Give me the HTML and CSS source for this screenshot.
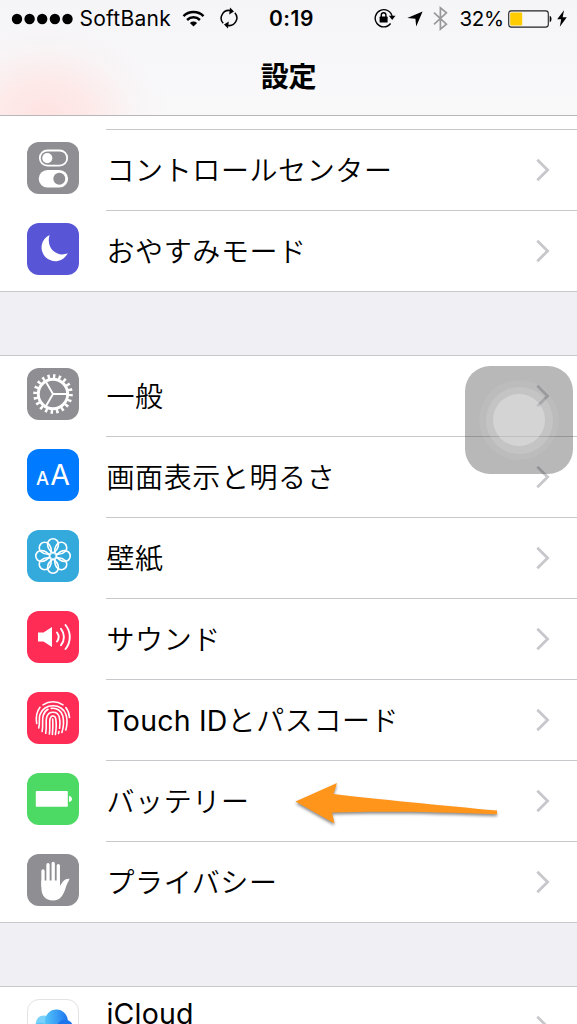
FILE: index.html
```html
<!DOCTYPE html>
<html lang="ja">
<head>
<meta charset="utf-8">
<title>設定</title>
<link rel="stylesheet" href="styles.css">
</head>
<body>
<svg class="defs" width="0" height="0">
  <symbol id="chev" viewBox="0 0 16 26"><path d="M2.3 2.800 12.600 13 2.300 23.200" fill="none" stroke="#c7c7cc" stroke-width="2.800"/></symbol>
</svg>
<div class="screen">
  <header class="header">
    <div class="status">
      <svg class="dots" width="62" height="12"><g fill="#000"><circle cx="6" cy="6" r="5.2"/><circle cx="18.6" cy="6" r="5.2"/><circle cx="31.2" cy="6" r="5.2"/><circle cx="43.9" cy="6" r="5.2"/><circle cx="56.5" cy="6" r="5.2"/></g></svg>
      <span class="carrier">SoftBank</span>
      <svg class="wifi" width="22" height="17" viewBox="0 0 22 17"><g fill="none" stroke="#000" stroke-width="2.5"><path d="M1 6.2a14.2 14.2 0 0 1 20 0"/><path d="M4.6 10a9.1 9.1 0 0 1 12.8 0"/></g><path d="M7.4 12.9a5.1 5.1 0 0 1 7.2 0L11 16.5z"/></svg>
      <svg class="sync" width="18" height="22" viewBox="0 0 18 22"><g fill="none" stroke="#000" stroke-width="1.5"><path d="M3.2 16.2A7.6 7.6 0 0 1 11 3.8"/><path d="M14.8 5.8A7.6 7.6 0 0 1 7 18.2"/></g><path d="M10 .4 14 4.6 9.2 7.4zM8 21.6 4 17.4l4.8-2.8z"/></svg>
      <span class="time">0:19</span>
      <svg class="lock" width="22" height="20" viewBox="0 0 22 20"><path d="M16.6 15.5A8.6 8.6 0 1 1 18.3 9" fill="none" stroke="#000" stroke-width="1.4"/><path d="M14.9 7.8h6.6l-3.3 4.2z"/><rect x="5.6" y="8.6" width="8" height="6" rx=".6"/><path d="M7.3 9V7a2.3 2.3 0 0 1 4.6 0v2" fill="none" stroke="#000" stroke-width="1.4"/></svg>
      <svg class="loc" width="16" height="16" viewBox="0 0 16 16"><path d="M15.6.4 9.2 15.6 8.4 7.8.3 7z"/></svg>
      <svg class="bt" width="15" height="25" viewBox="0 0 15 25"><path d="m1 6.6 12.400 11.600-6 5V1.800l6 5L1 18.400" fill="none" stroke="#999" stroke-width="1.700"/></svg>
      <span class="percent">32%</span>
      <svg class="batt" width="44" height="18" viewBox="0 0 44 18"><rect x=".7" y=".9" width="39.6" height="16.2" rx="2.6" fill="none" stroke="#222" stroke-width="1.1"/><rect x="2.2" y="2.4" width="12" height="13.2" rx="1" fill="#fc0"/><path d="M41.7 5.8c2.4.6 2.4 5.8 0 6.4z"/></svg>
      <svg class="bolt" width="10" height="17" viewBox="0 0 10 17"><path d="M7 .2.2 9.3h4L2.8 16.8 9.8 7.3H5.7z"/></svg>
    </div>
    <h1 class="title">設定</h1>
  </header>
  <main>
    <section class="group first">
      <div class="rule"></div>
      <div class="row">
        <svg class="icon gray" viewBox="0 0 52 52"><rect x="12.8" y="8.5" width="27.4" height="15.2" rx="7.6" fill="none" stroke="#fff" stroke-width="1.8"/><circle cx="20.3" cy="16.1" r="5.1" fill="#fff"/><rect x="11.7" y="28" width="29.4" height="17.6" rx="8.8" fill="#fff"/><circle cx="32.3" cy="36.8" r="6" fill="#8e8e93"/></svg>
        <div class="cell"><span class="label">コントロールセンター</span><svg class="chev"><use href="#chev"/></svg></div>
      </div>
      <div class="row last">
        <svg class="icon purple" viewBox="0 0 52 52"><path d="M22.600 12A13.700 13.700 0 1 0 40.800 30C31 35.200 18.400 25.500 22.600 12z" fill="#fff"/></svg>
        <div class="cell"><span class="label">おやすみモード</span><svg class="chev"><use href="#chev"/></svg></div>
      </div>
    </section>
    <section class="group">
      <div class="row">
        <svg class="icon gray" viewBox="0 0 52 52"><g fill="none" stroke="#fff"><circle cx="26" cy="26" r="14.700" stroke-width="2.900"/><circle cx="26" cy="26" r="17.700" stroke-width="4.200" pathLength="200" stroke-dasharray="4.400 5.600"/><path d="M26 26h14M26 26l-7-12.100M26 26l-7 12.100" stroke-width="1.900"/></g></svg>
        <div class="cell"><span class="label">一般</span><svg class="chev"><use href="#chev"/></svg></div>
      </div>
      <div class="row">
        <div class="icon blue"><span class="small-a">A</span><span class="big-a">A</span></div>
        <div class="cell"><span class="label">画面表示と明るさ</span><svg class="chev"><use href="#chev"/></svg></div>
      </div>
      <div class="row">
        <svg class="icon cyan" viewBox="0 0 52 52"><defs><path id="petal" d="M0-3C-3.800-5.500-5.400-8.500-5.400-11.800a5.400 5.400 0 0 1 10.800 0C5.400-8.500 3.800-5.500 0-3z"/></defs><g transform="translate(26 26)" fill="none" stroke="#fff" stroke-width="1.600"><use href="#petal"/><use href="#petal" transform="rotate(45)"/><use href="#petal" transform="rotate(90)"/><use href="#petal" transform="rotate(135)"/><use href="#petal" transform="rotate(180)"/><use href="#petal" transform="rotate(225)"/><use href="#petal" transform="rotate(270)"/><use href="#petal" transform="rotate(315)"/></g></svg>
        <div class="cell"><span class="label">壁紙</span><svg class="chev"><use href="#chev"/></svg></div>
      </div>
      <div class="row">
        <svg class="icon red" viewBox="0 0 52 52"><path d="M11 21.500h5.500L25 16v20l-8.500-5.500H11z" fill="#fff"/><g fill="none" stroke="#fff" stroke-width="1.900" stroke-linecap="round"><path d="M30 21.500a7.500 7.500 0 0 1 0 9"/><path d="M34 17.800a13 13 0 0 1 0 16.400"/><path d="M38.500 14a19 19 0 0 1 0 24"/></g></svg>
        <div class="cell"><span class="label">サウンド</span><svg class="chev"><use href="#chev"/></svg></div>
      </div>
      <div class="row">
        <svg class="icon red" viewBox="0 0 52 52"><g fill="none" stroke="#fff" stroke-width="1.600" stroke-linecap="round"><path d="M16 12.800C22 8.700 30 8.700 36 12.800"/><path d="M13 15.300C9.800 19.500 8.600 25 9.700 31.500M38.800 15.500c2.200 2.700 3.400 6 3.700 10"/><path d="M11.700 36C13.200 31 11.600 27 12.900 22.800 16.500 10.800 35.500 10.500 39.100 23c1.300 4.500 1.100 10-.3 15"/><path d="M15.100 39.500c1.300-6-.2-11.500 1-15.800C17 20.500 18.800 18.500 21 17.300M24.300 16.400c5.500-.8 10.200 2.500 11.500 7.600 1.100 4.800.7 11.500-.9 16.500"/><path d="M18.700 41.300c1.300-6.500-.3-12.300 1-16.300 2-6.300 10.700-6.300 12.500-.2 1.200 4.200 1 8.200.4 11.500M32 39.500l-.5 2"/><path d="M22.400 42c1-6.500-.3-12.500.8-15.700 1.200-3.300 4.700-3.100 5.500.2.800 4.500.600 10.500-.3 16M25.700 27c.4 5 .2 10.500-.3 15.500"/></g></svg>
        <div class="cell"><span class="label"><span class="latin">Touch ID</span>とパスコード</span><svg class="chev"><use href="#chev"/></svg></div>
      </div>
      <div class="row">
        <svg class="icon green" viewBox="0 0 52 52"><rect x="8.800" y="18" width="32" height="15.800" rx=".8" fill="#fff"/><path d="M42 23c4 .3 4 5.600 0 5.900z" fill="#fff"/></svg>
        <div class="cell"><span class="label">バッテリー</span><svg class="chev"><use href="#chev"/></svg></div>
        <svg class="arrow" width="212" height="52" viewBox="290 778 212 52"><path d="M295.500 801.500 337 783l-3.500 11c40 5 110 11.500 163.500 16.600v3.600C440 812 380 811 332 812.500l2.500 11z" fill="#ff951b"/></svg>
      </div>
      <div class="row last">
        <svg class="icon gray" viewBox="0 0 52 52"><g fill="none" stroke="#fff" stroke-width="3.300" stroke-linecap="round"><path d="M16 17v15M21 10.700V30M26.200 9.400V30M31.300 11.600V30"/></g><path d="M14.400 26.500h18.500v5.500c2-2.500 3.400-7.600 9.600-7.200-.8 2.800-2.400 4.200-3.600 8.200C36.800 40.500 33.700 46.500 26 46.500S14.400 41.500 14.400 34z" fill="#fff"/></svg>
        <div class="cell"><span class="label">プライバシー</span><svg class="chev"><use href="#chev"/></svg></div>
      </div>
    </section>
    <section class="group">
      <div class="row last">
        <svg class="icon white" viewBox="0 0 52 52"><defs><linearGradient id="cloud" x1="0" x2="1"><stop offset="0" stop-color="#55c4f8"/><stop offset=".5" stop-color="#3a9ff5"/><stop offset="1" stop-color="#1d75ee"/></linearGradient></defs><circle cx="16.500" cy="24.500" r="8.500" fill="#7ad2fa"/><circle cx="13" cy="32" r="8.500" fill="#5cc5f8"/><circle cx="29.500" cy="22" r="12" fill="url(#cloud)"/><circle cx="38.500" cy="29" r="8.500" fill="#1d75ee"/><rect x="12" y="28" width="28" height="12" fill="#2f8bf2"/></svg>
        <div class="cell"><span class="label cloud"><span class="latin">iCloud</span></span><svg class="chev"><use href="#chev"/></svg></div>
      </div>
    </section>
  </main>
  <div class="touch"><div class="ring outer"><div class="ring middle"><div class="ring inner"></div></div></div></div>
</div>
</body>
</html>
```
FILE: styles.css
```css
* { box-sizing: border-box; }
body { margin: 0; background: #efeff4; color: #000; font-family: Inter, "Noto Sans CJK JP", sans-serif; }
.defs { position: absolute; }
.screen { position: relative; width: 577px; height: 1024px; overflow: hidden; background: #efeff4; }

.header {
  height: 116px;
  border-bottom: 1px solid #b7b7ba;
  background: radial-gradient(ellipse 125px 96px at 46px 116px, #fee3e2 0%, rgba(254, 231, 230, .85) 35%, rgba(250, 240, 241, .45) 70%, rgba(247, 247, 249, 0) 100%), linear-gradient(#f5f5f8, #f9f9fa);
}
.status { display: flex; align-items: center; height: 38px; font-size: 20.500px; white-space: nowrap; }
.status svg { flex: none; }
.dots { margin-left: 11px; }
.carrier { width: 94px; margin-left: 6.500px; margin-top: -1px; font-size: 21px; letter-spacing: .25px; }
.wifi { margin: -2px 0 0 8px; width: 23px; }
.sync { margin: -2px 0 0 15px; }
.time { width: 48px; margin: -1px 0 0 31.500px; font-size: 21px; font-weight: 600; letter-spacing: .5px; }
.lock { margin: -2px 0 0 56.500px; }
.loc { margin-left: 11.500px; }
.bt { margin: -1px 0 0 9.500px; }
.percent { width: 44px; margin: -1px 0 0 12px; font-size: 20.500px; letter-spacing: -.35px; }
.batt { margin-left: 4.500px; }
.bolt { margin: -2px 0 0 4.500px; }
.title { margin: 17px 0 0; font: 700 28px/40px "Noto Sans CJK JP", sans-serif; text-align: center; letter-spacing: -.3px; }

.group { margin-bottom: 63px; border-top: 1px solid #c8c7cc; background: #fff; }
.group.first { padding-top: 13px; border-top: 0; }
.rule { height: 1px; margin-left: 106px; background: #c8c7cc; }
.row { position: relative; display: flex; height: 81px; padding-left: 27px; }
.row.last { border-bottom: 1px solid #c8c7cc; }
.icon { flex: none; width: 52px; height: 52px; margin-top: 12px; border-radius: 12px; overflow: hidden; }
.gray { background: #8e8e93; }
.purple { background: #5856d6; }
.blue { display: flex; justify-content: center; align-items: baseline; gap: 1px; background: #007aff; color: #fff; font-family: Inter, sans-serif; }
.small-a { font-size: 18.500px; line-height: 51px; font-weight: 500; }
.big-a { font-size: 28.500px; line-height: 51px; }
.cyan { background: #34aadc; }
.red { background: #ff2d55; }
.green { background: #4cd964; }
.white { border: 1px solid #e3e3e5; background: #fff; }
.cell { display: flex; flex: 1; justify-content: space-between; margin-left: 27px; padding: 0 26px 0 .5px; border-bottom: 1px solid #c8c7cc; }
.last .cell { border-bottom: 0; }
.label { font: 350 28px/78px "Noto Sans CJK JP", sans-serif; letter-spacing: .6px; white-space: nowrap; }
.latin { font-family: Inter, sans-serif; font-size: 28.500px; font-weight: 400; letter-spacing: .2px; }
.label.cloud { line-height: 50px; }
.chev { width: 16px; height: 26px; margin-top: 27px; }

.arrow { position: absolute; left: 290px; top: 17px; filter: drop-shadow(0 2px 1.500px rgba(0, 0, 0, .45)); }

.touch { position: absolute; left: 465px; top: 366px; display: grid; place-items: center; width: 108px; height: 108px; border-radius: 25px; background: rgba(60, 60, 60, .364); }
.ring { display: grid; place-items: center; border-radius: 50%; }
.outer { width: 80px; height: 80px; background: rgba(255, 255, 255, .06); }
.middle { width: 67px; height: 67px; background: rgba(255, 255, 255, .13); }
.inner { width: 52px; height: 52px; background: rgba(255, 255, 255, .28); }
```
